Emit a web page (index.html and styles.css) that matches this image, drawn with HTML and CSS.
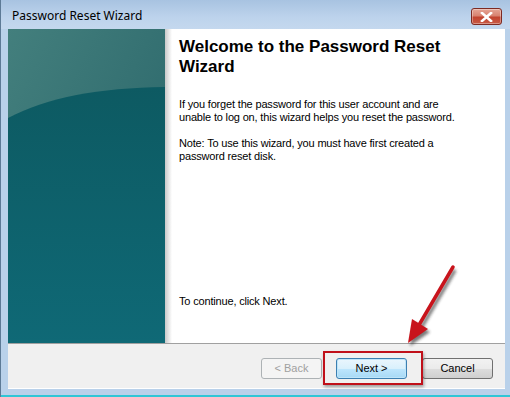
FILE: index.html
```html
<!DOCTYPE html>
<html>
<head>
<meta charset="utf-8">
<link rel="stylesheet" href="styles.css">
</head>
<body>
<div class="window">
  <div class="titlebar">
    <span class="title">Password Reset Wizard</span>
    <div class="close">
      <svg width="13" height="10" viewBox="0 0 13 10"><path d="M2 1 L11 9 M11 1 L2 9" stroke="#fff" stroke-width="2.6" stroke-linecap="square"/></svg>
    </div>
  </div>
  <div class="client">
    <div class="main">
      <div class="side">
        <svg class="side-art" viewBox="0 0 157 314" preserveAspectRatio="none">
          <defs>
            <linearGradient id="top" x1="0" y1="0" x2="1" y2="1">
              <stop offset="0" stop-color="#437f7d"/>
              <stop offset="0.6" stop-color="#326e70"/>
              <stop offset="1" stop-color="#2b6a6d"/>
            </linearGradient>
            <linearGradient id="bot" x1="0" y1="0" x2="0" y2="1">
              <stop offset="0" stop-color="#0d5a62"/>
              <stop offset="1" stop-color="#0f6976"/>
            </linearGradient>
          </defs>
          <rect width="157" height="314" fill="url(#top)"/>
          <path d="M0 89 C40 68 90 59 157 58 L157 314 L0 314 Z" fill="url(#bot)"/>
        </svg>
      </div>
      <div class="shade"></div>
      <div class="content">
        <h1 class="heading">Welcome to the Password Reset Wizard</h1>
        <p class="para">If you forget the password for this user account and are unable to log on, this wizard helps you reset the password.</p>
        <p class="para">Note: To use this wizard, you must have first created a password reset disk.</p>
        <p class="para continue">To continue, click Next.</p>
      </div>
    </div>
    <div class="footer">
      <button class="btn disabled">&lt; Back</button>
      <button class="btn default">Next &gt;</button>
      <button class="btn cancel">Cancel</button>
      <div class="highlight"></div>
    </div>
  </div>
  <div class="bottom-frame"></div>
  <svg class="arrow" width="70" height="90" viewBox="0 0 70 90">
    <defs>
      <filter id="sh" x="-30%" y="-30%" width="160%" height="160%">
        <feGaussianBlur stdDeviation="1.6"/>
      </filter>
    </defs>
    <g transform="translate(2,3)" filter="url(#sh)" opacity="0.6">
      <path d="M50 4 L16 62" stroke="#222" stroke-width="3.5"/>
      <path d="M5 80 L9 56 L25 66 Z" fill="#222"/>
    </g>
    <path d="M50 4 L16 62" stroke="#c8141c" stroke-width="3.5" stroke-linecap="round"/>
    <path d="M5 80 L9 56 L25 66 Z" fill="#c8141c"/>
  </svg>
</div>
</body>
</html>
```

FILE: styles.css
```css
html, body {
  margin: 0;
  padding: 0;
}
body {
  width: 510px;
  height: 397px;
  overflow: hidden;
  font-family: "Liberation Sans", Arial, sans-serif;
}
.window {
  position: relative;
  width: 510px;
  height: 397px;
  background: #b9d1ea;
  box-sizing: border-box;
  border-left: 1px solid #5d7a96;
  display: flex;
  flex-direction: column;
}
.titlebar {
  height: 29px;
  flex: none;
  background: linear-gradient(180deg, #a8c3e1 0%, #bdd3ec 60%, #c4d8ee 100%);
  display: flex;
  align-items: center;
  justify-content: space-between;
  padding: 0 8px 0 11px;
}
.title {
  font-family: "Noto Sans", "Liberation Sans", sans-serif;
  font-size: 12px;
  color: #000;
  margin-top: 2px;
}
.close {
  width: 29px;
  height: 15px;
  border: 1px solid #7d2a22;
  border-radius: 3px;
  background: linear-gradient(180deg, #e5a596 0%, #d88270 45%, #c2432f 55%, #c85b46 100%);
  display: flex;
  align-items: center;
  justify-content: center;
  margin-top: 4px;
  box-shadow: inset 0 0 0 1px rgba(255,255,255,0.35);
}
.close svg { display: block; }
.client {
  margin: 0 5px 0 7px;
  height: 360px;
  display: flex;
  flex-direction: column;
}
.main {
  height: 314px;
  display: flex;
  background: #fff;
}
.side {
  width: 157px;
  height: 314px;
  flex: none;
}
.side-art {
  display: block;
  width: 157px;
  height: 314px;
}
.shade {
  width: 7px;
  flex: none;
  background: linear-gradient(90deg, #c9c9c9, #ffffff);
}
.content {
  flex: 1;
  padding: 8px 10px 0 7px;
  display: flex;
  flex-direction: column;
}
.heading {
  margin: 0;
  font-size: 17px;
  font-weight: bold;
  line-height: 20px;
  color: #000;
  width: 300px;
}
.para {
  margin: 0;
  font-size: 11px;
  letter-spacing: -0.17px;
  line-height: 13px;
  color: #000;
  width: 290px;
}
.heading + .para { margin-top: 21px; }
.para + .para { margin-top: 13px; }
.para.continue { margin-top: auto; margin-bottom: 35px; }
.footer {
  position: relative;
  flex: 1;
  background: #f0f0f0;
  border-top: 1px solid #a0a0a0;
  border-bottom: 1px solid #ffffff;
  display: flex;
  align-items: center;
  justify-content: flex-end;
  gap: 14px;
  padding: 0 12px 0 0;
}
.btn {
  width: 61px;
  height: 21px;
  box-sizing: border-box;
  font-family: "Liberation Sans", Arial, sans-serif;
  font-size: 11px;
  border: 1px solid #707070;
  border-radius: 3px;
  background: linear-gradient(180deg, #f2f2f2 0%, #ebebeb 50%, #dddddd 51%, #cfcfcf 100%);
  color: #000;
  padding: 0;
  margin-top: 4px;
}
.btn.disabled {
  border-color: #adb2b5;
  background: #f4f4f4;
  color: #a0a0a0;
}
.btn.default {
  width: 71px;
  border-color: #3c7fb1;
  background: linear-gradient(180deg, #eaf6fd 0%, #d9f0fc 50%, #bee6fd 51%, #a7d9f5 100%);
  box-shadow: inset 0 0 0 1px #bfe5f9;
}
.btn.cancel {
  width: 71px;
  margin-left: 1px;
}
.highlight {
  position: absolute;
  left: 315px;
  top: 7px;
  width: 100px;
  height: 34px;
  box-sizing: border-box;
  border: 2px solid #c0101a;
  box-shadow: 1px 2px 3px rgba(0,0,0,0.35);
}
.bottom-frame {
  flex: 1;
  border-bottom: 2px solid #2fc6d6;
}
.arrow {
  position: absolute;
  left: 402px;
  top: 263px;
}
```
